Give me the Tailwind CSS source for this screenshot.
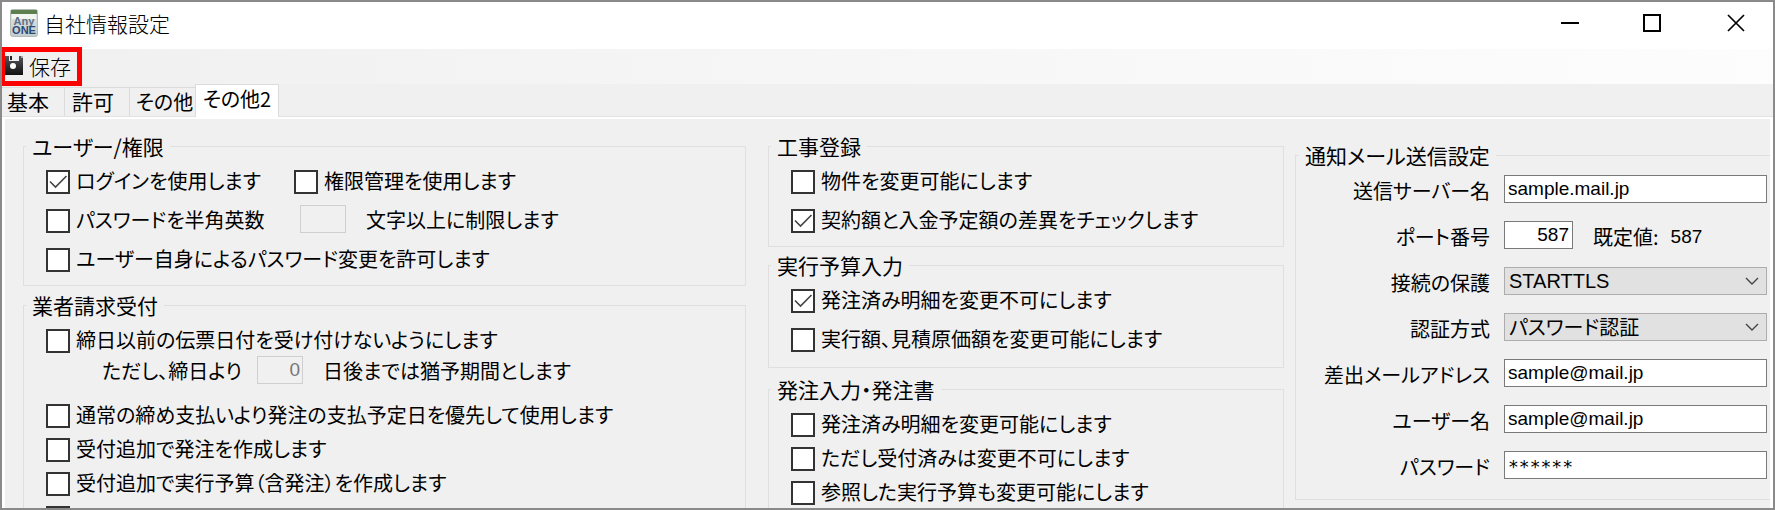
<!DOCTYPE html>
<html lang="ja">
<head>
    <meta charset="UTF-8">
    <meta name="viewport" content="width=device-width, initial-scale=1.0">
    <title>自社情報設定</title>
    <script src="https://cdn.jsdelivr.net/npm/@tailwindcss/browser@4"></script>
</head>
<body class="bg-white text-black">
    <svg class="hidden">
        <symbol id="check" viewBox="0 0 24 24">
            <path d="M4 11.5 L9.5 17 L20.5 6" fill="none" stroke="#444" stroke-width="1.6"/>
        </symbol>
        <symbol id="chevron" viewBox="0 0 14 8">
            <path d="M1 1 L7 7 L13 1" fill="none" stroke="#444" stroke-width="1.4"/>
        </symbol>
    </svg>

    <div class="flex h-screen flex-col overflow-hidden border-2 border-[#8a8a8a] font-['Noto_Sans_CJK_JP',sans-serif] text-[21px] leading-6 [font-feature-settings:'palt']">
        <!-- Title bar -->
        <header class="flex h-[47px] shrink-0 items-center justify-between bg-white pl-2">
            <div class="flex items-center gap-1.5 pb-1.5">
                <svg class="size-7" viewBox="0 0 28 28">
                    <defs>
                        <linearGradient id="appbg" x1="0" y1="0" x2="0" y2="1">
                            <stop offset="0" stop-color="#dfe8e0"/>
                            <stop offset="1" stop-color="#c3ccd0"/>
                        </linearGradient>
                    </defs>
                    <rect x="0.5" y="0.5" width="27" height="27" rx="2" fill="url(#appbg)" stroke="#b4bcb6"/>
                    <rect x="1" y="1" width="26" height="4" fill="#5e7f50"/>
                    <rect x="2" y="5" width="24" height="5" fill="#f1f6f0"/>
                    <text x="14" y="16" text-anchor="middle" font-family="Liberation Sans" font-size="11" font-weight="bold" fill="#5d7088">Any</text>
                    <text x="14" y="25" text-anchor="middle" font-family="Liberation Sans" font-size="11" font-weight="bold" fill="#2c4878">ONE</text>
                </svg>
                <h1 class="font-light">自社情報設定</h1>
            </div>
            <div class="flex gap-3 self-stretch pb-1.5">
                <button aria-label="最小化" class="flex w-[70px] items-center justify-center">
                    <svg class="size-5" viewBox="0 0 20 20"><path d="M1 10 H19" stroke="#000" stroke-width="2"/></svg>
                </button>
                <button aria-label="最大化" class="flex w-[70px] items-center justify-center">
                    <svg class="size-5" viewBox="0 0 20 20"><rect x="2" y="2" width="16" height="16" fill="none" stroke="#000" stroke-width="2"/></svg>
                </button>
                <button aria-label="閉じる" class="flex w-[74px] items-center justify-center">
                    <svg class="size-5" viewBox="0 0 20 20"><path d="M2 2 L18 18 M18 2 L2 18" stroke="#000" stroke-width="1.7"/></svg>
                </button>
            </div>
        </header>

        <!-- Toolbar -->
        <div class="flex h-[35px] shrink-0 bg-linear-to-r from-[#f0f0f0] to-[#fdfdfd]">
            <button class="relative flex items-center gap-1.5 border-r border-[#d8d8d8] pr-2.5 pb-0.5 pl-0.5">
                <svg class="size-[19px]" viewBox="0 0 19 19">
                    <defs>
                        <linearGradient id="disk" x1="0" y1="0" x2="0" y2="1">
                            <stop offset="0" stop-color="#55555a"/>
                            <stop offset="1" stop-color="#121214"/>
                        </linearGradient>
                    </defs>
                    <path d="M0 0 H19 V19 H0 Z" fill="url(#disk)"/>
                    <rect x="5" y="0" width="10" height="5" fill="#f0f0f0"/>
                    <rect x="6" y="0" width="2" height="4" fill="#222226"/>
                    <rect x="17" y="0" width="2" height="2" fill="#aaa"/>
                    <circle cx="9" cy="10" r="3" fill="#fff"/>
                </svg>
                <span class="font-light">保存</span>
                <span class="pointer-events-none absolute -top-0.5 -right-px -bottom-0.5 -left-0.5 border-5 border-[#ff0000]"></span>
            </button>
        </div>

        <!-- Tabs -->
        <div role="tablist" class="flex h-[33px] shrink-0 items-end border-b border-[#e2e2e2] bg-[#f0f0f0]">
            <button role="tab" class="h-[29px] w-[63px] border-t border-r border-[#dcdcdc] pr-2.5 pb-0.5">基本</button>
            <button role="tab" class="h-[29px] w-[65px] border-t border-r border-[#dcdcdc] pr-2 pb-0.5">許可</button>
            <button role="tab" class="h-[29px] w-[65px] border-t border-[#dcdcdc] pb-0.5 pl-1 text-xl">その他</button>
            <button role="tab" aria-selected="true" class="-mb-px h-[33px] w-[84px] border-x border-t border-[#dcdcdc] bg-white pb-1.5 text-xl">その他2</button>
        </div>

        <!-- Panel -->
        <main class="grid min-h-0 grow grid-cols-[723fr_538fr_486fr] items-start border-x-3 border-t-2 border-white bg-[#f0f0f0] pt-[15px] pl-[18px] text-xl/[22px]">
            <div class="flex min-w-0 flex-col gap-[7px] whitespace-nowrap">
                <fieldset class="flex flex-col gap-[15px] border border-[#dfdfdf] pt-3 pr-4 pb-[13px] pl-[22px]">
                    <legend class="-ml-5 px-1.5 text-[21px]/6">ユーザー/権限</legend>
                    <div class="flex h-6">
                        <label class="flex w-62 gap-[6px]">
                            <span class="grid size-6 shrink-0">
                                <input type="checkbox" checked class="peer col-start-1 row-start-1 size-6 appearance-none border-2 border-[#333] bg-white">
                                <svg class="pointer-events-none col-start-1 row-start-1 hidden size-6 peer-checked:block"><use href="#check"/></svg>
                            </span>
                            ログインを使用します
                        </label>
                        <label class="flex gap-[6px]">
                            <input type="checkbox" class="size-6 shrink-0 appearance-none border-2 border-[#333] bg-white">
                            権限管理を使用します
                        </label>
                    </div>
                    <div class="flex h-6 items-end">
                        <label class="flex w-[254px] gap-[6px]">
                            <input type="checkbox" class="size-6 shrink-0 appearance-none border-2 border-[#333] bg-white">
                            パスワードを半角英数
                        </label>
                        <input id="minlen" type="text" disabled class="h-7 w-[46px] shrink-0 border border-[#cfcfcf] bg-[#f0f0f0] px-1 text-right text-[#777]">
                        <label for="minlen" class="h-6 pl-5">文字以上に制限します</label>
                    </div>
                    <label class="flex h-6 gap-[6px]">
                        <input type="checkbox" class="size-6 shrink-0 appearance-none border-2 border-[#333] bg-white">
                        ユーザー自身によるパスワード変更を許可します
                    </label>
                </fieldset>

                <fieldset class="flex flex-col border border-[#dfdfdf] pt-3 pr-4 pb-3 pl-[22px]">
                    <legend class="-ml-5 px-1.5 text-[21px]/6">業者請求受付</legend>
                    <label class="flex h-6 gap-[6px]">
                        <input type="checkbox" class="size-6 shrink-0 appearance-none border-2 border-[#333] bg-white">
                        締日以前の伝票日付を受け付けないようにします
                    </label>
                    <div class="mt-[3px] flex h-7 items-end pl-14">
                        <label for="grace" class="h-6 w-[155px]">ただし、締日より</label>
                        <input id="grace" type="text" value="0" disabled class="h-7 w-[46px] shrink-0 border border-[#cfcfcf] bg-[#f0f0f0] px-0.5 text-right font-['Liberation_Sans',sans-serif] text-[19px] text-[#777]">
                        <label for="grace" class="h-6 pl-5">日後までは猶予期間とします</label>
                    </div>
                    <div class="mt-5 flex flex-col gap-[10px]">
                        <label class="flex h-6 gap-[6px]">
                            <input type="checkbox" class="size-6 shrink-0 appearance-none border-2 border-[#333] bg-white">
                            通常の締め支払いより発注の支払予定日を優先して使用します
                        </label>
                        <label class="flex h-6 gap-[6px]">
                            <input type="checkbox" class="size-6 shrink-0 appearance-none border-2 border-[#333] bg-white">
                            受付追加で発注を作成します
                        </label>
                        <label class="flex h-6 gap-[6px]">
                            <input type="checkbox" class="size-6 shrink-0 appearance-none border-2 border-[#333] bg-white">
                            受付追加で実行予算（含発注）を作成します
                        </label>
                        <input type="checkbox" aria-label="受付追加" class="size-6 shrink-0 appearance-none border-2 border-[#333] bg-white">
                    </div>
                </fieldset>
            </div>

            <div class="flex min-w-0 flex-col gap-[6px] pl-[22px] whitespace-nowrap">
                <fieldset class="flex flex-col gap-[15px] border border-[#dfdfdf] pt-3 pr-4 pb-[13px] pl-[22px]">
                    <legend class="-ml-5 px-1.5 text-[21px]/6">工事登録</legend>
                    <label class="flex h-6 gap-[6px]">
                        <input type="checkbox" class="size-6 shrink-0 appearance-none border-2 border-[#333] bg-white">
                        物件を変更可能にします
                    </label>
                    <label class="flex h-6 gap-[6px]">
                        <span class="grid size-6 shrink-0">
                            <input type="checkbox" checked class="peer col-start-1 row-start-1 size-6 appearance-none border-2 border-[#333] bg-white">
                            <svg class="pointer-events-none col-start-1 row-start-1 hidden size-6 peer-checked:block"><use href="#check"/></svg>
                        </span>
                        契約額と入金予定額の差異をチェックします
                    </label>
                </fieldset>

                <fieldset class="flex flex-col gap-[15px] border border-[#dfdfdf] pt-3 pr-4 pb-[15px] pl-[22px]">
                    <legend class="-ml-5 px-1.5 text-[21px]/6">実行予算入力</legend>
                    <label class="flex h-6 gap-[6px]">
                        <span class="grid size-6 shrink-0">
                            <input type="checkbox" checked class="peer col-start-1 row-start-1 size-6 appearance-none border-2 border-[#333] bg-white">
                            <svg class="pointer-events-none col-start-1 row-start-1 hidden size-6 peer-checked:block"><use href="#check"/></svg>
                        </span>
                        発注済み明細を変更不可にします
                    </label>
                    <label class="flex h-6 gap-[6px]">
                        <input type="checkbox" class="size-6 shrink-0 appearance-none border-2 border-[#333] bg-white">
                        実行額、見積原価額を変更可能にします
                    </label>
                </fieldset>

                <fieldset class="mt-[3px] flex flex-col gap-[10px] border border-[#dfdfdf] pt-3 pr-4 pb-3 pl-[22px]">
                    <legend class="-ml-5 px-1.5 text-[21px]/6">発注入力・発注書</legend>
                    <label class="flex h-6 gap-[6px]">
                        <input type="checkbox" class="size-6 shrink-0 appearance-none border-2 border-[#333] bg-white">
                        発注済み明細を変更可能にします
                    </label>
                    <label class="flex h-6 gap-[6px]">
                        <input type="checkbox" class="size-6 shrink-0 appearance-none border-2 border-[#333] bg-white">
                        ただし受付済みは変更不可にします
                    </label>
                    <label class="flex h-6 gap-[6px]">
                        <input type="checkbox" class="size-6 shrink-0 appearance-none border-2 border-[#333] bg-white">
                        参照した実行予算も変更可能にします
                    </label>
                </fieldset>
            </div>

            <div class="min-w-0 pt-[9px] pl-[11px] whitespace-nowrap">
                <fieldset class="grid grid-cols-[194px_1fr] items-end gap-x-3.5 gap-y-[18px] border border-r-0 border-[#dfdfdf] pt-2 pr-[3px] pb-5 leading-6">
                    <legend class="ml-[3px] px-1.5 text-[21px]">通知メール送信設定</legend>

                    <label for="server" class="text-right">送信サーバー名</label>
                    <input id="server" type="text" value="sample.mail.jp" class="h-7 w-full border border-[#7a7a7a] bg-white px-[3px] font-['Liberation_Sans',sans-serif] text-[19px]">

                    <label for="port" class="text-right">ポート番号</label>
                    <div class="flex items-end gap-5">
                        <input id="port" type="text" value="587" class="h-7 w-[69px] border border-[#7a7a7a] bg-white px-[3px] text-right font-['Liberation_Sans',sans-serif] text-[19px]">
                        <p class="flex gap-3">既定値: <span class="font-['Liberation_Sans',sans-serif] text-[19px]">587</span></p>
                    </div>

                    <label for="secure" class="text-right">接続の保護</label>
                    <div class="relative">
                        <select id="secure" class="block h-7 w-full appearance-none border border-[#adadad] bg-[#e1e1e1] px-1 font-['Liberation_Sans',sans-serif]">
                            <option>STARTTLS</option>
                        </select>
                        <svg class="pointer-events-none absolute top-2.5 right-2 h-2 w-3.5"><use href="#chevron"/></svg>
                    </div>

                    <label for="auth" class="text-right">認証方式</label>
                    <div class="relative">
                        <select id="auth" class="block h-7 w-full appearance-none border border-[#adadad] bg-[#e1e1e1] px-1">
                            <option>パスワード認証</option>
                        </select>
                        <svg class="pointer-events-none absolute top-2.5 right-2 h-2 w-3.5"><use href="#chevron"/></svg>
                    </div>

                    <label for="from" class="text-right">差出メールアドレス</label>
                    <input id="from" type="text" value="sample@mail.jp" class="h-7 w-full border border-[#7a7a7a] bg-white px-[3px] font-['Liberation_Sans',sans-serif] text-[19px]">

                    <label for="user" class="text-right">ユーザー名</label>
                    <input id="user" type="text" value="sample@mail.jp" class="h-7 w-full border border-[#7a7a7a] bg-white px-[3px] font-['Liberation_Sans',sans-serif] text-[19px]">

                    <label for="pass" class="text-right">パスワード</label>
                    <input id="pass" type="text" value="******" class="h-7 w-full border border-[#7a7a7a] bg-white px-[3px] pt-1 font-['DejaVu_Sans_Mono',monospace] text-lg">
                </fieldset>
            </div>
        </main>
    </div>
</body>
</html>
